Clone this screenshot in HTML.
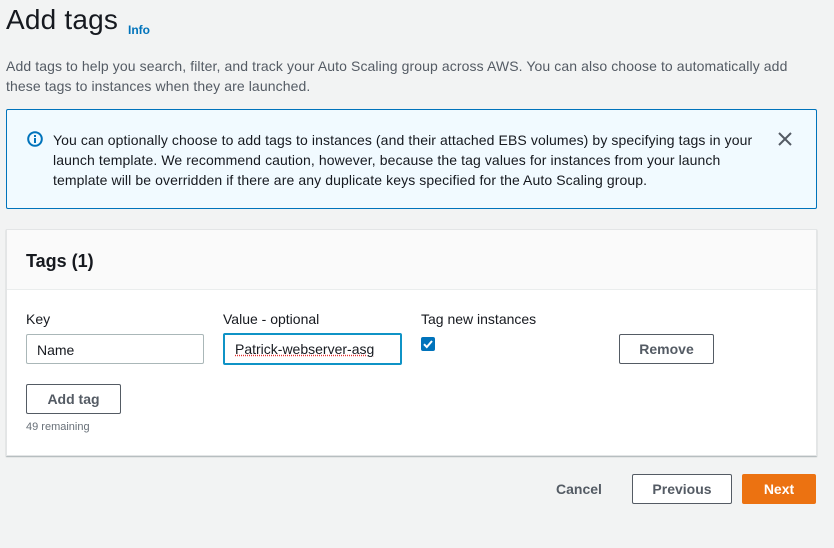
<!DOCTYPE html>
<html><head><meta charset="utf-8"><style>
*{box-sizing:border-box;margin:0;padding:0}
body{width:834px;height:548px;background:#f2f3f3;font-family:"Liberation Sans",Arial,sans-serif;color:#16191f;position:relative;overflow:hidden}
.abs{position:absolute}
h1{position:absolute;left:6px;top:4px;font-size:28px;font-weight:normal;color:#16191f;letter-spacing:0.2px}
.info{position:absolute;left:128px;top:23px;font-size:12px;font-weight:bold;color:#0073bb}
.desc{position:absolute;left:6px;top:56px;font-size:14px;line-height:20px;color:#545b64;width:800px;letter-spacing:0.1px}
.alert{position:absolute;left:6px;top:109px;width:811px;height:100px;background:#f1faff;border:1px solid #0073bb;border-radius:2px}
.alert .t{position:absolute;left:46px;top:20px;font-size:14px;line-height:20px;color:#16191f;width:706px;letter-spacing:0.1px}
.panel{position:absolute;left:6px;top:229px;width:811px;height:227px;background:#fff;border:1px solid #e3e5e6;box-shadow:0 1px 1px rgba(0,28,36,.3)}
.ph{height:60px;background:#fafafa;border-bottom:1px solid #eaeded}
.ph div{position:absolute;left:19px;top:21px;font-size:18px;font-weight:bold}
.lbl{position:absolute;font-size:14px;color:#16191f}
.inp{position:absolute;height:30px;border:1px solid #aab7b8;border-radius:2px;font-size:14px;padding:7px 10px;background:#fff}
.btn{position:absolute;height:30px;border:1px solid #545b64;border-radius:2px;background:#fff;font-size:14px;font-weight:bold;color:#545b64;text-align:center;line-height:28px}
</style></head><body>
<h1>Add tags</h1>
<div class="info">Info</div>
<div class="desc">Add tags to help you search, filter, and track your Auto Scaling group across AWS. You can also choose to automatically add these tags to instances when they are launched.</div>
<div class="alert">
<svg class="abs" style="left:20px;top:21px" width="16" height="16" viewBox="0 0 16 16"><circle cx="8" cy="8" r="6.8" fill="none" stroke="#0073bb" stroke-width="2"/><rect x="7" y="7" width="2" height="5" fill="#0073bb"/><rect x="7" y="4" width="2" height="2" fill="#0073bb"/></svg>
<div class="t">You can optionally choose to add tags to instances (and their attached EBS volumes) by specifying tags in your launch template. We recommend caution, however, because the tag values for instances from your launch<br>template will be overridden if there are any duplicate keys specified for the Auto Scaling group.</div>
<svg class="abs" style="left:771px;top:22px" width="14" height="14" viewBox="0 0 14 14"><path d="M1 1L13 13M13 1L1 13" stroke="#545b64" stroke-width="2"/></svg>
</div>
<div class="panel"><div class="ph"><div>Tags (1)</div></div></div>
<div class="lbl" style="left:26px;top:311px">Key</div>
<div class="lbl" style="left:223px;top:311px">Value - optional</div>
<div class="lbl" style="left:421px;top:311px">Tag new instances</div>
<div class="inp" style="left:26px;top:334px;width:178px">Name</div>
<div class="inp" style="left:223px;top:333px;width:179px;height:32px;border:2px solid #0f93c6;padding:6px 10px"><span style="text-decoration:underline dotted #e03030">Patrick-webserver-asg</span></div>
<div class="abs" style="left:421px;top:337px;width:14px;height:14px;background:#0073bb;border-radius:2px"><svg width="14" height="14" viewBox="0 0 14 14" style="display:block"><path d="M3 7.2L5.8 10L11 4" fill="none" stroke="#fff" stroke-width="2"/></svg></div>
<div class="btn" style="left:619px;top:334px;width:95px">Remove</div>
<div class="btn" style="left:26px;top:384px;width:95px">Add tag</div>
<div class="abs" style="left:26px;top:421px;font-size:11px;color:#687078">49 remaining</div>
<div class="abs" style="left:556px;top:481px;font-size:14px;font-weight:bold;color:#545b64">Cancel</div>
<div class="btn" style="left:632px;top:474px;width:100px">Previous</div>
<div class="btn" style="left:742px;top:474px;width:74px;background:#ec7211;border-color:#ec7211;color:#fff">Next</div>
</body></html>
